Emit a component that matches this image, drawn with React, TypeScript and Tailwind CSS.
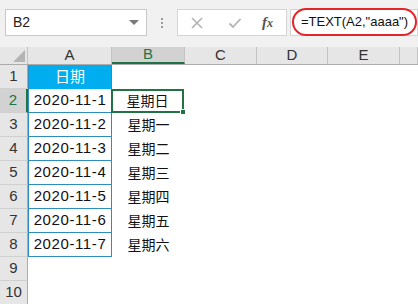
import React from "react";

const dates = ["2020-11-1", "2020-11-2", "2020-11-3", "2020-11-4", "2020-11-5", "2020-11-6", "2020-11-7"];
const weekdays = ["星期日", "星期一", "星期二", "星期三", "星期四", "星期五", "星期六"];

const colHeaders = [
  { label: "A", w: "w-[84px]" },
  { label: "B", w: "w-[73px]" },
  { label: "C", w: "w-[72px]" },
  { label: "D", w: "w-[71px]" },
  { label: "E", w: "w-[72px]" },
  { label: "", w: "flex-1" },
];

const cjk = "font-['Liberation_Sans','Noto_Sans_CJK_SC',sans-serif]";

export default function App() {
  return (
    <div className={`w-[418px] h-[304px] overflow-hidden bg-white ${cjk}`}>
      {/* Formula bar */}
      <div className="h-[47px] bg-[#f1f1f1] flex items-start pt-[9px] pl-[5px]">
        <div className="w-[142px] h-[27px] bg-white border border-[#c9c9c9] flex items-center justify-between pl-[7px] pr-[7px]">
          <span className="text-[14px] text-[#222]">B2</span>
          <span className="w-0 h-0 border-l-[5px] border-r-[5px] border-t-[5px] border-l-transparent border-r-transparent border-t-[#7a7a7a]" />
        </div>
        <div className="w-[30px] h-[27px] flex flex-col items-center justify-center gap-[2px]">
          <span className="w-[2px] h-[2px] bg-[#9a9a9a]" />
          <span className="w-[2px] h-[2px] bg-[#9a9a9a]" />
          <span className="w-[2px] h-[2px] bg-[#9a9a9a]" />
        </div>
        <div className="w-[110px] h-[27px] bg-white border border-[#d4d4d4] flex items-center pl-[12px]">
          <svg width="14" height="14" viewBox="0 0 14 14" className="mr-[24px]">
            <path d="M2 2 L12 12 M12 2 L2 12" stroke="#b3b3b3" strokeWidth="1.6" fill="none" />
          </svg>
          <svg width="14" height="14" viewBox="0 0 14 14" className="mr-[20px]">
            <path d="M1.5 7.5 L5 11 L12.5 3" stroke="#b3b3b3" strokeWidth="1.8" fill="none" />
          </svg>
          <span className="font-['Liberation_Serif',serif] italic text-[15px] text-[#555] font-bold">f<span className="text-[12px]">x</span></span>
        </div>
        <div className="ml-[3px] flex-1 h-[27px] bg-white border border-[#d4d4d4] flex items-center pl-[1px]">
          <div className="w-[125px] h-[28px] -mt-px border-2 border-[#e2242b] rounded-[14px] flex items-center justify-center">
            <span className="text-[13px] text-[#111] font-['Liberation_Sans',sans-serif]">=TEXT(A2,"aaaa")</span>
          </div>
        </div>
      </div>

      {/* Column headers */}
      <div className="flex h-[18px] bg-[#e6e6e6] border-b border-[#ababab]">
        <div className="w-[28px] border-r border-[#c4c4c4] flex items-end justify-end pr-[2px] pb-[2px]">
          <svg width="12" height="12" viewBox="0 0 12 12">
            <path d="M12 0 L12 12 L0 12 Z" fill="#b4b4b4" />
          </svg>
        </div>
        {colHeaders.map((c) => (
          <div
            key={c.label || "F"}
            className={`${c.w} flex items-center justify-center text-[15px] border-r border-[#c4c4c4] ${
              c.label === "B" ? "bg-[#d2d2d2] text-[#217346] border-b-2 border-b-[#217346]" : "text-[#333]"
            }`}
          >
            {c.label}
          </div>
        ))}
      </div>

      {/* Rows */}
      {Array.from({ length: 10 }, (_, i) => {
        const row = i + 1;
        return (
          <div key={row} className="flex h-[24px]">
            <div
              className={`w-[28px] shrink-0 flex items-center justify-center text-[15px] border-b border-[#d0d0d0] ${
                row === 2 ? "bg-[#d2d2d2] text-[#217346] border-r-2 border-r-[#217346]" : "bg-[#e6e6e6] text-[#333] border-r border-r-[#ababab]"
              }`}
            >
              {row}
            </div>
            {/* Column A */}
            {row === 1 ? (
              <div className="w-[84px] bg-[#00aeef] text-white text-[15px] flex items-center justify-center border-x border-[#2d8cc0]">
                日期
              </div>
            ) : row <= 8 ? (
              <div className="w-[84px] flex items-center justify-center text-[15px] tracking-[0.6px] text-[#111] border-x border-b border-[#2d8cc0]">
                {dates[row - 2]}
              </div>
            ) : (
              <div className="w-[84px]" />
            )}
            {/* Column B */}
            {row === 2 ? (
              <div className="w-[73px] relative border-2 border-[#217346] -ml-px flex items-center justify-center text-[14px] text-[#111]">
                {weekdays[0]}
                <span className="absolute -right-[4px] -bottom-[4px] w-[6px] h-[6px] bg-[#217346] border border-white" />
              </div>
            ) : (
              <div className="w-[73px] flex items-center justify-center text-[14px] text-[#111]">
                {row >= 3 && row <= 8 ? weekdays[row - 2] : ""}
              </div>
            )}
            <div className="flex-1" />
          </div>
        );
      })}
    </div>
  );
}
